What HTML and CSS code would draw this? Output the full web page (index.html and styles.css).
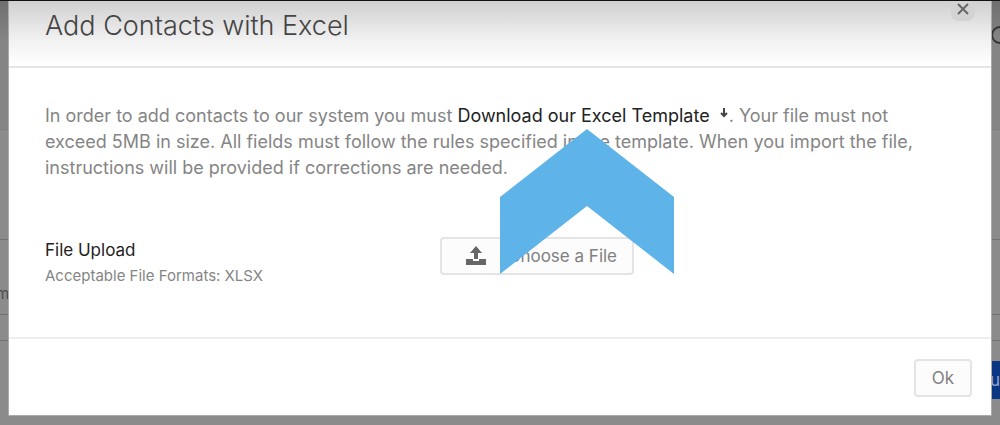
FILE: index.html
```html
<!DOCTYPE html>
<html lang="en">
  <head>
    <meta charset="UTF-8" />
    <meta name="viewport" content="width=device-width, initial-scale=1.0" />
    <title>Add Contacts with Excel</title>
    <link rel="stylesheet" href="styles.css" />
  </head>
  <body>
    <!-- page under the modal -->
    <div class="page">
      <div class="page-top">
        <svg class="search" viewBox="0 0 10 20" width="10" height="20">
          <circle cx="10" cy="10" r="8" />
        </svg>
      </div>
      <div class="page-head"></div>
      <div class="page-row">
        <span class="name">m</span>
      </div>
      <div class="page-line"></div>
      <div class="page-actions">
        <button class="add" type="button">ou</button>
      </div>
    </div>

    <div class="modal" role="dialog" aria-labelledby="title">
      <div class="modal-header">
        <h1 id="title">Add Contacts with Excel</h1>
        <button class="close" type="button" aria-label="Close">
          <svg viewBox="0 0 12 12" width="12" height="12">
            <path d="M1 1l10 10M11 1L1 11" />
          </svg>
        </button>
      </div>

      <div class="modal-body">
        <p class="intro">
          In order to add contacts to our system you must
          <a href="#">Download our Excel Template
            <svg class="down" viewBox="0 0 8 10" width="8" height="10">
              <path d="M4 0v8M1 5l3 3 3-3" />
            </svg></a>. Your file must not<br />
          exceed 5MB in size. All fields must follow the rules specified in the template. When you import the file,<br />
          instructions will be provided if corrections are needed.
        </p>

        <div class="upload">
          <div class="upload-label">
            <strong id="upload">File Upload</strong>
            <small>Acceptable File Formats: XLSX</small>
          </div>
          <button class="btn choose" type="button" aria-describedby="upload">
            <svg viewBox="0 0 20 20" width="20" height="20">
              <path d="M10 0l6 7h-4v6H8V7H4z" />
              <path d="M0 13h7v2h6v-2h7v6H0z" />
            </svg>
            Choose a File
          </button>
        </div>
      </div>

      <div class="modal-footer">
        <button class="btn" type="button">Ok</button>
      </div>

      <!-- arrow that points at the template link -->
      <svg class="pointer" viewBox="0 0 174 145" width="174" height="145">
        <path d="M87 0l87 68v77L87 77 0 145V68z" />
      </svg>
    </div>
  </body>
</html>
```

FILE: styles.css
```css
* {
  box-sizing: border-box;
}
body {
  margin: 0;
  background-color: #8b8b8b;
  font-family: Inter, "Liberation Sans", sans-serif;
  color: #858585;
}
button {
  font-family: inherit;
  cursor: pointer;
}

/* page under the modal */
.page {
  border-top: 1px solid #111;
}
.page-top {
  height: 129px;
  padding-top: 24px;
  background-image: linear-gradient(#6e6e6e, #858585 40px);
  border-bottom: 1px solid #7e7e7e;
}
.search {
  display: block;
  margin-left: auto;
  fill: none;
  stroke: #333;
  stroke-width: 2;
}
.page-head {
  height: 110px;
  border-bottom: 1px solid #717171;
}
.page-row {
  height: 75px;
  padding-top: 42px;
  border-bottom: 1px solid #717171;
}
.page-row .name {
  display: block;
  margin-left: -4px;
  font-size: 15px;
  line-height: 24px;
  color: #4d4d4d;
}
.page-line {
  height: 26px;
  border-bottom: 1px solid #717171;
}
.page-actions {
  display: flex;
  justify-content: flex-end;
  padding-top: 20px;
}
.add {
  width: 120px;
  height: 38px;
  padding: 0;
  border: none;
  background-color: #0a3684;
  color: #8fa4cc;
  font-size: 17px;
  text-align: right;
}

/* modal */
.modal {
  position: absolute;
  top: 1px;
  left: 8px;
  right: 8px;
  background-color: #fff;
  border: 1px solid #aaa;
  border-top: none;
}
.modal-header {
  display: flex;
  justify-content: space-between;
  align-items: flex-start;
  height: 67px;
  padding: 0 16px 0 36px;
  background-image: linear-gradient(#d0d0d0, #f2f2f2 40px, #fff);
  border-bottom: 2px solid #e6e6e6;
}
h1 {
  margin: 8px 0 0;
  font-size: 27px;
  font-weight: 300;
  line-height: 34px;
  color: #444;
}
.close {
  width: 24px;
  height: 20px;
  padding: 0;
  border: none;
  border-radius: 0 0 8px 8px;
  background-color: #d3d3d3;
}
.close svg {
  display: block;
  margin: 0 auto 4px;
  fill: none;
  stroke: #666;
  stroke-width: 2;
}
.modal-body {
  padding: 35px 36px 48px;
}
.intro {
  margin: 0;
  font-size: 18px;
  line-height: 26px;
  white-space: nowrap;
}
.intro a {
  color: #222;
  text-decoration: none;
}
.down {
  margin: 0 1px 4px 5px;
  fill: none;
  stroke: #444;
  stroke-width: 2;
}
.upload {
  display: flex;
  align-items: flex-start;
  margin-top: 56px;
}
.upload-label {
  width: 395px;
}
.upload-label strong {
  display: block;
  font-size: 17px;
  font-weight: 400;
  line-height: 26px;
  color: #222;
}
.upload-label small {
  display: block;
  font-size: 15px;
  line-height: 26px;
}
.btn {
  height: 38px;
  padding: 0 16px;
  border: 2px solid #e4e4e4;
  border-radius: 4px;
  background-color: #fcfcfc;
  color: #808080;
  font-size: 17px;
}
.choose {
  display: flex;
  align-items: center;
  gap: 22px;
  padding: 0 15px 0 24px;
}
.choose svg {
  fill: #666;
}
.modal-footer {
  display: flex;
  justify-content: flex-end;
  padding: 20px 19px 18px;
  border-top: 2px solid #eee;
}
.pointer {
  position: absolute;
  top: 128px;
  left: 491px;
  fill: #5eb4e9;
}
```
